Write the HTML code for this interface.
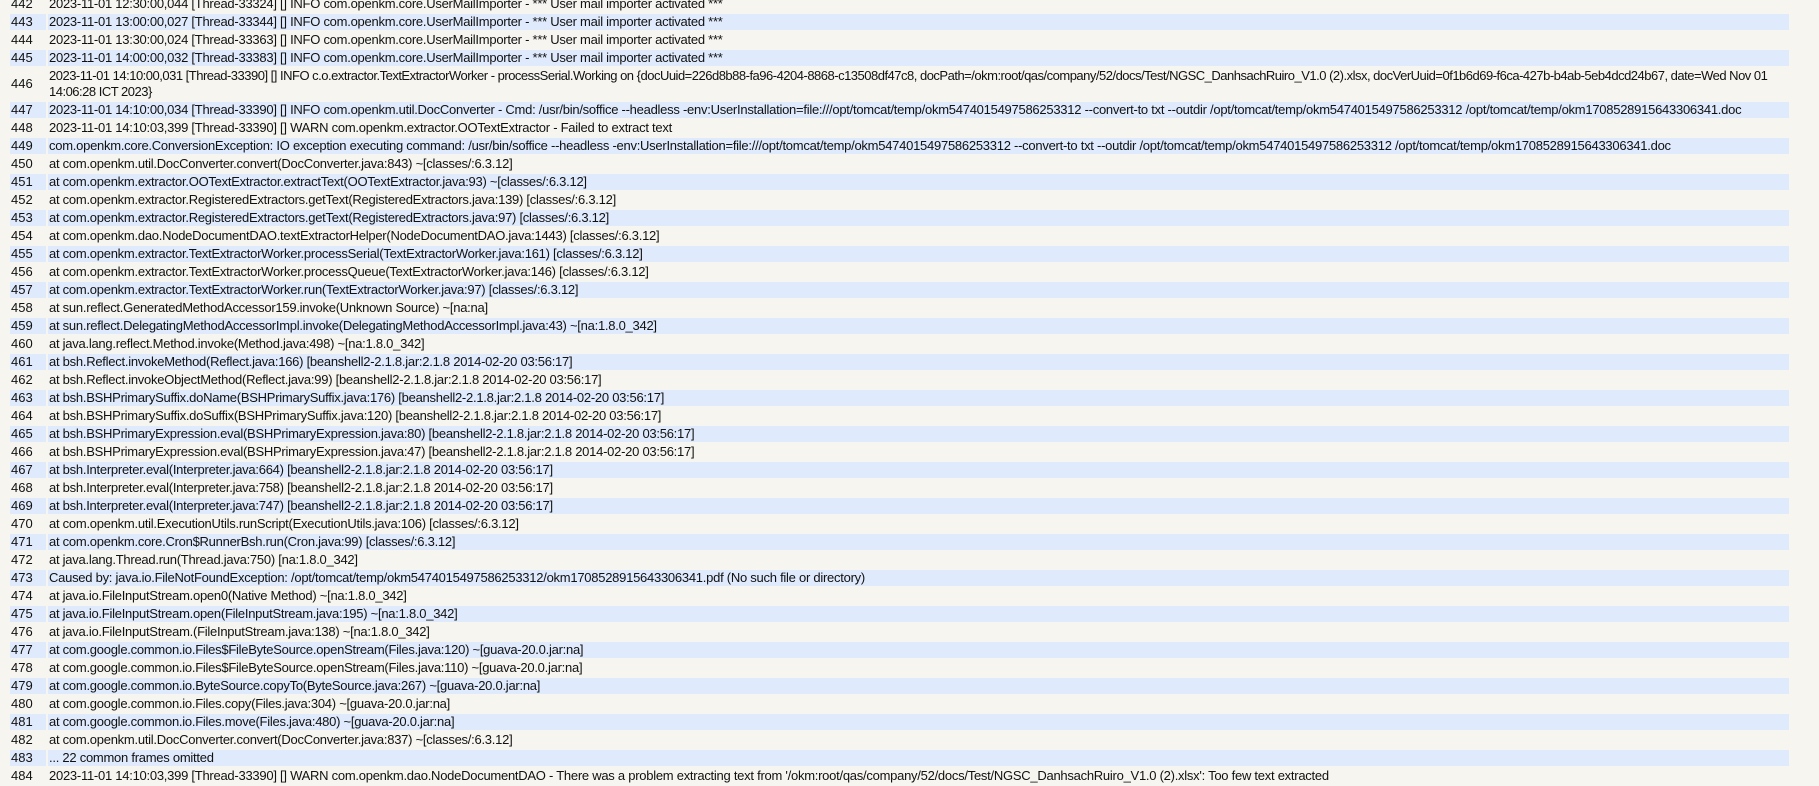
<!DOCTYPE html>
<html><head><meta charset="utf-8"><style>
html,body{margin:0;padding:0;background:#f6f5f0;width:1819px;height:783px;overflow:hidden}
table{position:absolute;left:8px;top:-6px;border-collapse:separate;border-spacing:2px;width:1783px;table-layout:fixed;font-family:"Liberation Sans",Arial,sans-serif;font-size:13px;letter-spacing:-0.26px;line-height:16px;color:#111}
td{padding:0 1px;vertical-align:middle;white-space:nowrap;overflow:hidden}
td.n{letter-spacing:0}
td.t{letter-spacing:-0.5px}
tr:nth-child(even) td{background:#dfeafc}
</style></head><body>
<table>
<colgroup><col style="width:36px"><col></colgroup>
<tr><td class="n">442</td><td>2023-11-01 12:30:00,044 [Thread-33324] [] INFO com.openkm.core.UserMailImporter - *** User mail importer activated ***</td></tr>
<tr><td class="n">443</td><td>2023-11-01 13:00:00,027 [Thread-33344] [] INFO com.openkm.core.UserMailImporter - *** User mail importer activated ***</td></tr>
<tr><td class="n">444</td><td>2023-11-01 13:30:00,024 [Thread-33363] [] INFO com.openkm.core.UserMailImporter - *** User mail importer activated ***</td></tr>
<tr><td class="n">445</td><td>2023-11-01 14:00:00,032 [Thread-33383] [] INFO com.openkm.core.UserMailImporter - *** User mail importer activated ***</td></tr>
<tr><td class="n">446</td><td class="t">2023-11-01 14:10:00,031 [Thread-33390] [] INFO c.o.extractor.TextExtractorWorker - processSerial.Working on {docUuid=226d8b88-fa96-4204-8868-c13508df47c8, docPath=/okm:root/qas/company/52/docs/Test/NGSC_DanhsachRuiro_V1.0 (2).xlsx, docVerUuid=0f1b6d69-f6ca-427b-b4ab-5eb4dcd24b67, date=Wed Nov 01<br>14:06:28 ICT 2023}</td></tr>
<tr><td class="n">447</td><td>2023-11-01 14:10:00,034 [Thread-33390] [] INFO com.openkm.util.DocConverter - Cmd: /usr/bin/soffice --headless -env:UserInstallation=file:///opt/tomcat/temp/okm5474015497586253312 --convert-to txt --outdir /opt/tomcat/temp/okm5474015497586253312 /opt/tomcat/temp/okm1708528915643306341.doc</td></tr>
<tr><td class="n">448</td><td>2023-11-01 14:10:03,399 [Thread-33390] [] WARN com.openkm.extractor.OOTextExtractor - Failed to extract text</td></tr>
<tr><td class="n">449</td><td>com.openkm.core.ConversionException: IO exception executing command: /usr/bin/soffice --headless -env:UserInstallation=file:///opt/tomcat/temp/okm5474015497586253312 --convert-to txt --outdir /opt/tomcat/temp/okm5474015497586253312 /opt/tomcat/temp/okm1708528915643306341.doc</td></tr>
<tr><td class="n">450</td><td>at com.openkm.util.DocConverter.convert(DocConverter.java:843) ~[classes/:6.3.12]</td></tr>
<tr><td class="n">451</td><td>at com.openkm.extractor.OOTextExtractor.extractText(OOTextExtractor.java:93) ~[classes/:6.3.12]</td></tr>
<tr><td class="n">452</td><td>at com.openkm.extractor.RegisteredExtractors.getText(RegisteredExtractors.java:139) [classes/:6.3.12]</td></tr>
<tr><td class="n">453</td><td>at com.openkm.extractor.RegisteredExtractors.getText(RegisteredExtractors.java:97) [classes/:6.3.12]</td></tr>
<tr><td class="n">454</td><td>at com.openkm.dao.NodeDocumentDAO.textExtractorHelper(NodeDocumentDAO.java:1443) [classes/:6.3.12]</td></tr>
<tr><td class="n">455</td><td>at com.openkm.extractor.TextExtractorWorker.processSerial(TextExtractorWorker.java:161) [classes/:6.3.12]</td></tr>
<tr><td class="n">456</td><td>at com.openkm.extractor.TextExtractorWorker.processQueue(TextExtractorWorker.java:146) [classes/:6.3.12]</td></tr>
<tr><td class="n">457</td><td>at com.openkm.extractor.TextExtractorWorker.run(TextExtractorWorker.java:97) [classes/:6.3.12]</td></tr>
<tr><td class="n">458</td><td>at sun.reflect.GeneratedMethodAccessor159.invoke(Unknown Source) ~[na:na]</td></tr>
<tr><td class="n">459</td><td>at sun.reflect.DelegatingMethodAccessorImpl.invoke(DelegatingMethodAccessorImpl.java:43) ~[na:1.8.0_342]</td></tr>
<tr><td class="n">460</td><td>at java.lang.reflect.Method.invoke(Method.java:498) ~[na:1.8.0_342]</td></tr>
<tr><td class="n">461</td><td>at bsh.Reflect.invokeMethod(Reflect.java:166) [beanshell2-2.1.8.jar:2.1.8 2014-02-20 03:56:17]</td></tr>
<tr><td class="n">462</td><td>at bsh.Reflect.invokeObjectMethod(Reflect.java:99) [beanshell2-2.1.8.jar:2.1.8 2014-02-20 03:56:17]</td></tr>
<tr><td class="n">463</td><td>at bsh.BSHPrimarySuffix.doName(BSHPrimarySuffix.java:176) [beanshell2-2.1.8.jar:2.1.8 2014-02-20 03:56:17]</td></tr>
<tr><td class="n">464</td><td>at bsh.BSHPrimarySuffix.doSuffix(BSHPrimarySuffix.java:120) [beanshell2-2.1.8.jar:2.1.8 2014-02-20 03:56:17]</td></tr>
<tr><td class="n">465</td><td>at bsh.BSHPrimaryExpression.eval(BSHPrimaryExpression.java:80) [beanshell2-2.1.8.jar:2.1.8 2014-02-20 03:56:17]</td></tr>
<tr><td class="n">466</td><td>at bsh.BSHPrimaryExpression.eval(BSHPrimaryExpression.java:47) [beanshell2-2.1.8.jar:2.1.8 2014-02-20 03:56:17]</td></tr>
<tr><td class="n">467</td><td>at bsh.Interpreter.eval(Interpreter.java:664) [beanshell2-2.1.8.jar:2.1.8 2014-02-20 03:56:17]</td></tr>
<tr><td class="n">468</td><td>at bsh.Interpreter.eval(Interpreter.java:758) [beanshell2-2.1.8.jar:2.1.8 2014-02-20 03:56:17]</td></tr>
<tr><td class="n">469</td><td>at bsh.Interpreter.eval(Interpreter.java:747) [beanshell2-2.1.8.jar:2.1.8 2014-02-20 03:56:17]</td></tr>
<tr><td class="n">470</td><td>at com.openkm.util.ExecutionUtils.runScript(ExecutionUtils.java:106) [classes/:6.3.12]</td></tr>
<tr><td class="n">471</td><td>at com.openkm.core.Cron$RunnerBsh.run(Cron.java:99) [classes/:6.3.12]</td></tr>
<tr><td class="n">472</td><td>at java.lang.Thread.run(Thread.java:750) [na:1.8.0_342]</td></tr>
<tr><td class="n">473</td><td>Caused by: java.io.FileNotFoundException: /opt/tomcat/temp/okm5474015497586253312/okm1708528915643306341.pdf (No such file or directory)</td></tr>
<tr><td class="n">474</td><td>at java.io.FileInputStream.open0(Native Method) ~[na:1.8.0_342]</td></tr>
<tr><td class="n">475</td><td>at java.io.FileInputStream.open(FileInputStream.java:195) ~[na:1.8.0_342]</td></tr>
<tr><td class="n">476</td><td>at java.io.FileInputStream.(FileInputStream.java:138) ~[na:1.8.0_342]</td></tr>
<tr><td class="n">477</td><td>at com.google.common.io.Files$FileByteSource.openStream(Files.java:120) ~[guava-20.0.jar:na]</td></tr>
<tr><td class="n">478</td><td>at com.google.common.io.Files$FileByteSource.openStream(Files.java:110) ~[guava-20.0.jar:na]</td></tr>
<tr><td class="n">479</td><td>at com.google.common.io.ByteSource.copyTo(ByteSource.java:267) ~[guava-20.0.jar:na]</td></tr>
<tr><td class="n">480</td><td>at com.google.common.io.Files.copy(Files.java:304) ~[guava-20.0.jar:na]</td></tr>
<tr><td class="n">481</td><td>at com.google.common.io.Files.move(Files.java:480) ~[guava-20.0.jar:na]</td></tr>
<tr><td class="n">482</td><td>at com.openkm.util.DocConverter.convert(DocConverter.java:837) ~[classes/:6.3.12]</td></tr>
<tr><td class="n">483</td><td>... 22 common frames omitted</td></tr>
<tr><td class="n">484</td><td>2023-11-01 14:10:03,399 [Thread-33390] [] WARN com.openkm.dao.NodeDocumentDAO - There was a problem extracting text from '/okm:root/qas/company/52/docs/Test/NGSC_DanhsachRuiro_V1.0 (2).xlsx': Too few text extracted</td></tr>
</table>
</body></html>
